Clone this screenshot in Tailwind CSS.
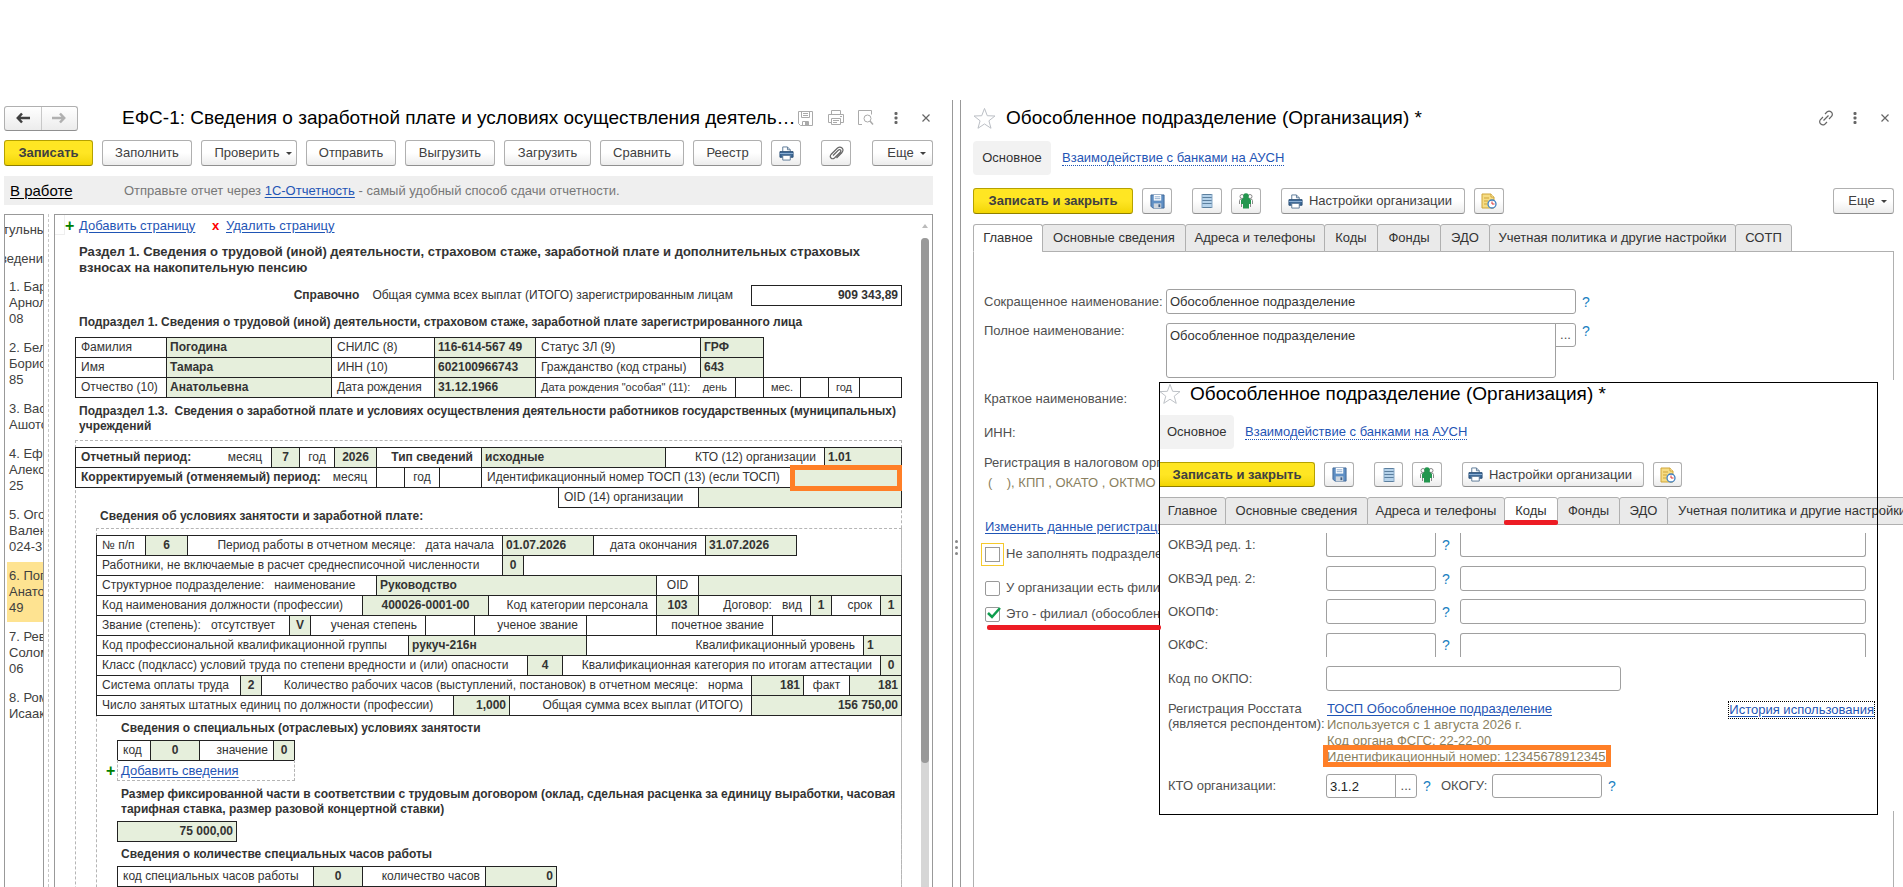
<!doctype html>
<html lang="ru">
  <head>
    <meta charset="UTF-8" />
    <meta name="viewport" content="width=device-width, initial-scale=1.0" />
    <title>ЕФС-1: Сведения о заработной плате</title>
    <script src="https://cdn.jsdelivr.net/npm/@tailwindcss/browser@4"></script>
  </head>
  <body
    class="h-screen overflow-hidden bg-white pt-[100px] font-['Liberation_Sans',Arial,sans-serif] text-[13px] leading-4 text-[#404040]"
  >
    <!-- shared icons -->
    <svg class="hidden">
      <symbol id="i-floppy" viewBox="0 0 16 16">
        <path d="M1 1h14v14H3l-2-2z" fill="#5f8fc4" stroke="#3f6896" />
        <path d="M4 1h8v6H4z" fill="#fff" />
        <path d="M5 3h6M5 5h6" stroke="#8aa9cc" />
        <path d="M4 10h8v5H4z" fill="#cfd6de" />
        <path d="M9 11h2v3H9z" fill="#3f5f86" />
      </symbol>
      <symbol id="i-printer" viewBox="0 0 16 16">
        <path d="M4 6V1h5l3 3v2" fill="#fff" stroke="#5b7896" />
        <path d="M9 1v3h3" fill="none" stroke="#5b7896" />
        <path d="M1 6h14v6H1z" fill="#3d6a99" stroke="#2c4f74" />
        <path d="M1 8h14" stroke="#8fb2d6" />
        <path d="M4 10h8v5H4z" fill="#fff" stroke="#5b7896" />
      </symbol>
      <symbol id="i-list" viewBox="0 0 12 16">
        <path d="M1 1h10v14H1z" fill="#b5d2ea" />
        <path
          d="M1 1.500h10M1 4.500h10M1 7.500h10M1 10.500h10M1 14.500h10"
          stroke="#5c7f9e"
        />
        <path d="M1 1v14M11 1v14" stroke="#8aabc8" />
      </symbol>
      <symbol id="i-people" viewBox="0 0 16 16">
        <g fill="#fff" stroke="#8a8a8a">
          <circle cx="4" cy="3.500" r="2" />
          <circle cx="12" cy="3.500" r="2" />
          <path d="M1.500 11V7.500q0-1.500 2-1.500h9q2 0 2 1.500V11M3.500 14v-5M12.500 14v-5" />
        </g>
        <circle cx="8" cy="3" r="2.800" fill="#23964e" />
        <path d="M5 5h6l2 2v4h-2v4.500H5V11H3V7z" fill="#23964e" />
      </symbol>
      <symbol id="i-report" viewBox="0 0 16 16">
        <path d="M1 1h9l3 3v11H1z" fill="#f6dc84" stroke="#cfa53a" />
        <path d="M10 1v3h3" fill="#fff3c4" stroke="#cfa53a" />
        <path d="M3 5h5M3 8h4M3 11h3" stroke="#cfa53a" />
        <circle cx="11" cy="11" r="4" fill="#fff" stroke="#3f7fbf" stroke-width="1.300" />
        <path d="M11 8.500V11h2.500" fill="none" stroke="#d33" />
      </symbol>
      <symbol id="i-star" viewBox="0 0 24 24">
        <path
          d="M12 1.500l2.900 7.600 8 .3-6.300 5 2.200 7.800L12 17.700l-6.800 4.500 2.200-7.800-6.300-5 8-.3z"
          fill="none"
          stroke="#b8bcc2"
        />
      </symbol>
      <symbol id="i-dots" viewBox="0 0 4 12">
        <g fill="#666">
          <rect x="0.500" y="0" width="3" height="3" rx="1" />
          <rect x="0.500" y="4.500" width="3" height="3" rx="1" />
          <rect x="0.500" y="9" width="3" height="3" rx="1" />
        </g>
      </symbol>
      <symbol id="i-close" viewBox="0 0 8 8">
        <path d="M.5.5l7 7m0-7l-7 7" stroke="#666" stroke-width="1.200" />
      </symbol>
    </svg>

    <div class="flex h-full">
      <!-- report window -->
      <section class="flex w-[953px] shrink-0 flex-col border-r border-[#999] pl-1">
        <header class="flex h-[36px] w-[929px] shrink-0 items-center">
          <div class="flex h-[25px] w-[74px] rounded-[3px] border border-[#b0b0b0] border-b-[#909090] bg-linear-to-b from-white to-[#ececec]">
            <button type="button" aria-label="Назад" class="flex flex-1 items-center justify-center border-r border-[#c8c8c8]">
              <svg class="h-[12px] w-[14px]" viewBox="0 0 14 12" fill="none" stroke="#404040" stroke-width="2.500"><path d="M14 6H2M6 1.500L1.800 6 6 10.500" /></svg>
            </button>
            <button type="button" aria-label="Вперед" class="flex flex-1 items-center justify-center">
              <svg class="h-[12px] w-[14px]" viewBox="0 0 14 12" fill="none" stroke="#b0b0b0" stroke-width="2.500"><path d="M0 6h12M8 1.500L12.200 6 8 10.500" /></svg>
            </button>
          </div>
          <h1 class="ml-[44px] w-[676px] text-[19px] leading-6 whitespace-nowrap text-black">ЕФС-1: Сведения о заработной плате и условиях осуществления деятель…</h1>
          <button type="button" aria-label="Сохранить">
            <svg class="size-[15px]" viewBox="0 0 15 15" fill="none" stroke="#aaa"><path d="M.5.5h14v14H2.500l-2-2zM3.500.5v6h8v-6M5 2.500h5M5 4.500h5M4.500 14.500v-4h6v4" /><path d="M7 11h3v3H7z" fill="#aaa" stroke="none" /></svg>
          </button>
          <button type="button" aria-label="Печать" class="ml-[15px]">
            <svg class="size-4" viewBox="0 0 16 16" fill="none" stroke="#aaa"><path d="M3.500 4.500v-4h9v4M3.500 12.500h-3v-8h15v8h-3M3.500 8.500h9v6h-9zM5 10.500h6M5 12.500h4M12 6.500h2" /></svg>
          </button>
          <button type="button" aria-label="Предварительный просмотр" class="ml-[14px]">
            <svg class="size-4" viewBox="0 0 16 16" fill="none" stroke="#aaa"><path d="M4 14.500H.5V.5h13v4" /><circle cx="9.500" cy="8.500" r="3.500" /><path d="M12 11l3 3.500" stroke-width="1.500" /></svg>
          </button>
          <button type="button" aria-label="Меню" class="ml-[20px]"><svg class="h-3 w-1"><use href="#i-dots" /></svg></button>
          <button type="button" aria-label="Закрыть" class="ml-[24px]"><svg class="size-2"><use href="#i-close" /></svg></button>
        </header>

        <div class="mt-[4px] flex w-[929px] shrink-0 gap-[9px] [&_button]:flex [&_button]:h-[26px] [&_button]:items-center [&_button]:justify-center [&_button]:rounded-[3px] [&_button]:border [&_button]:border-[#b0b0b0] [&_button]:border-b-[#909090] [&_button]:bg-linear-to-b [&_button]:from-white [&_button]:from-50% [&_button]:to-[#ececec]">
          <button type="button" class="w-[89px] border-[#b5a100]! border-b-[#8f7f00]! from-[#ffe623]! to-[#f2d500]! font-bold">Записать</button>
          <button type="button" class="w-[90px]">Заполнить</button>
          <button type="button" class="w-[96px] gap-[6px] pl-2">Проверить<span class="border-x-[3px] border-t-[3px] border-x-transparent border-t-[#404040]"></span></button>
          <button type="button" class="w-[90px]">Отправить</button>
          <button type="button" class="w-[90px]">Выгрузить</button>
          <button type="button" class="w-[87px]">Загрузить</button>
          <button type="button" class="w-[84px]">Сравнить</button>
          <button type="button" class="w-[69px]">Реестр</button>
          <button type="button" aria-label="Печать" class="w-[30px]"><svg class="size-[15px]"><use href="#i-printer" /></svg></button>
          <button type="button" aria-label="Присоединенные файлы" class="ml-[11px] w-[30px]">
            <svg class="size-[15px]" viewBox="0 0 15 15" fill="none" stroke="#666" stroke-width="1.200"><path d="M4 9.500l5.500-5.500q1.200-.8 2 0t0 2L5.500 12q-2 1.500-3.500 0t0-3.500L8.500 2q2.500-1.800 4.500 0t0 4.500L7.500 12" /></svg>
          </button>
          <button type="button" class="ml-auto w-[61px] gap-[6px] pl-2">Еще<span class="border-x-[3px] border-t-[3px] border-x-transparent border-t-[#404040]"></span></button>
        </div>

        <div class="mt-[10px] flex h-[29px] w-[929px] shrink-0 items-center bg-[#efefef]">
          <a href="#" class="ml-[6px] w-[114px] text-[15px] text-black underline underline-offset-2">В работе</a>
          <p class="text-[#777]">Отправьте отчет через <a href="#" class="text-[#1f55b5] underline underline-offset-2">1С-Отчетность</a> - самый удобный способ сдачи отчетности.</p>
        </div>

        <div class="mt-[9px] flex min-h-0 w-[929px] flex-1">
          <!-- section list -->
          <ul class="w-[40px] shrink-0 overflow-hidden border-x border-t border-[#999] pt-[7px] whitespace-nowrap">
            <li class="-ml-[2px]">тульный</li>
            <li class="mt-[13px] -ml-[5px]">ведения</li>
            <li class="mt-[12px] ml-1">1. Бар<br />Арнол<br />08</li>
            <li class="mt-[13px] ml-1">2. Бел<br />Борис<br />85</li>
            <li class="mt-[13px] ml-1">3. Вас<br />Ашото</li>
            <li class="mt-[13px] ml-1">4. Ефр<br />Алекс<br />25</li>
            <li class="mt-[13px] ml-1">5. Ого<br />Вален<br />024-37</li>
            <li class="mt-[7px] ml-[2px] bg-[#fee391] py-[6px] pl-[2px]">6. Пог<br />Анато<br />49</li>
            <li class="mt-[7px] ml-1">7. Рев<br />Солом<br />06</li>
            <li class="mt-[13px] ml-1">8. Ром<br />Исаак</li>
          </ul>
          <div class="ml-[4px] border-l border-dashed border-[#c8c8c8]"></div>

          <!-- form sheet -->
          <div class="ml-[5px] flex min-w-0 flex-1 overflow-hidden border-x border-t border-[#999] text-[12px] leading-[15px] text-[#333]">
            <div class="w-[866px] shrink-0">
              <div class="flex h-[20px] items-center text-[13px]">
                <span class="h-full w-[10px] border-r border-b border-[#eee]"></span>
                <span class="w-[14px] text-[16px] font-bold text-[#008000]">+</span>
                <a href="#" class="w-[133px] whitespace-nowrap text-[#1f55b5] underline underline-offset-2">Добавить страницу</a>
                <span class="w-[14px] font-bold text-[#f00]">x</span>
                <a href="#" class="whitespace-nowrap text-[#1f55b5] underline underline-offset-2">Удалить страницу</a>
              </div>

              <h2 class="mt-[9px] ml-6 text-[13px] leading-4 font-bold">Раздел 1. Сведения о трудовой (иной) деятельности, страховом стаже, заработной плате и дополнительных страховых<br />взносах на накопительную пенсию</h2>

              <div class="mt-[9px] flex h-[21px] w-[847px] items-center justify-end">
                <b>Справочно</b>
                <span class="mr-[18px] ml-[13px]">Общая сумма всех выплат (ИТОГО) зарегистрированным лицам</span>
                <span class="flex h-full w-[151px] items-center justify-end border border-[#222] pr-[3px] font-bold">909 343,89</span>
              </div>

              <h3 class="mt-[9px] ml-6 font-bold whitespace-nowrap">Подраздел 1. Сведения о трудовой (иной) деятельности, страховом стаже, заработной плате зарегистрированного лица</h3>

              <table class="mt-[7px] ml-5 block [&_td]:-mr-px [&_td]:-mb-px [&_td]:flex [&_td]:h-[21px] [&_td]:shrink-0 [&_td]:items-center [&_td]:border [&_td]:border-[#222] [&_td]:px-[5px] [&_td]:whitespace-pre [&_tr]:flex">
                <tbody class="block">
                  <tr>
                    <td class="w-[92px]">Фамилия</td>
                    <td class="w-[166px] bg-[#e6efdc] pl-[3px]! font-bold">Погодина</td>
                    <td class="w-[104px]">СНИЛС (8)</td>
                    <td class="w-[102px] bg-[#e6efdc] pl-[3px]! font-bold">116-614-567 49</td>
                    <td class="w-[166px]">Статус ЗЛ (9)</td>
                    <td class="w-[64px] bg-[#e6efdc] pl-[3px]! font-bold">ГРФ</td>
                  </tr>
                  <tr>
                    <td class="w-[92px]">Имя</td>
                    <td class="w-[166px] bg-[#e6efdc] pl-[3px]! font-bold">Тамара</td>
                    <td class="w-[104px]">ИНН (10)</td>
                    <td class="w-[102px] bg-[#e6efdc] pl-[3px]! font-bold">602100966743</td>
                    <td class="w-[166px]">Гражданство (код страны)</td>
                    <td class="w-[64px] bg-[#e6efdc] pl-[3px]! font-bold">643</td>
                  </tr>
                  <tr>
                    <td class="w-[92px]">Отчество (10)</td>
                    <td class="w-[166px] bg-[#e6efdc] pl-[3px]! font-bold">Анатольевна</td>
                    <td class="w-[104px]">Дата рождения</td>
                    <td class="w-[102px] bg-[#e6efdc] pl-[3px]! font-bold">31.12.1966</td>
                    <td class="w-[201px] justify-between pr-[8px]! text-[11px]">Дата рождения "особая" (11):<span>день</span></td>
                    <td class="w-[29px]"></td>
                    <td class="w-[38px] justify-center text-[11px]">мес.</td>
                    <td class="w-[29px]"></td>
                    <td class="w-[32px] justify-center text-[11px]">год</td>
                    <td class="w-[43px]"></td>
                  </tr>
                </tbody>
              </table>

              <h3 class="mt-[7px] ml-6 font-bold whitespace-pre">Подраздел 1.3.  Сведения о заработной плате и условиях осуществления деятельности работников государственных (муниципальных)<br />учреждений</h3>

              <div class="mt-[6px] ml-5 h-[600px] w-[827px] border-x border-t border-dashed border-[#b5b5b5] pt-[6px]">
                <table class="-ml-px block [&_td]:-mr-px [&_td]:-mb-px [&_td]:flex [&_td]:h-[21px] [&_td]:shrink-0 [&_td]:items-center [&_td]:border [&_td]:border-[#222] [&_td]:px-[5px] [&_td]:whitespace-pre [&_tr]:flex">
                  <tbody class="block">
                    <tr>
                      <td class="w-[197px] justify-between pr-[9px]!"><b>Отчетный период:</b><span>месяц</span></td>
                      <td class="w-[29px] justify-center bg-[#e6efdc] font-bold">7</td>
                      <td class="w-[36px] justify-center">год</td>
                      <td class="w-[43px] justify-center bg-[#e6efdc] font-bold">2026</td>
                      <td class="w-[106px] justify-end pr-[8px]! font-bold">Тип сведений</td>
                      <td class="w-[185px] bg-[#e6efdc] pl-[3px]! font-bold">исходные</td>
                      <td class="w-[160px] justify-end pr-[8px]!">КТО (12) организации</td>
                      <td class="w-[78px] bg-[#e6efdc] pl-[3px]! font-bold">1.01</td>
                    </tr>
                    <tr>
                      <td class="w-[302px] justify-between pr-[9px]!"><b>Корректируемый (отменяемый) период:</b><span>месяц</span></td>
                      <td class="w-[29px]"></td>
                      <td class="w-[36px] justify-center">год</td>
                      <td class="w-[43px]"></td>
                      <td class="w-[310px]">Идентификационный номер ТОСП (13) (если ТОСП)</td>
                      <td class="relative w-[112px] bg-[#e6efdc]"><span class="absolute -inset-x-px -top-[3px] -bottom-[4px] z-10 border-[5px] border-[#ff7f27]"></span></td>
                    </tr>
                    <tr class="pl-[483px]">
                      <td class="w-[141px]">OID (14) организации</td>
                      <td class="w-[204px] bg-[#e6efdc]"></td>
                    </tr>
                  </tbody>
                </table>

                <h4 class="mt-[2px] ml-6 font-bold">Сведения об условиях занятости и заработной плате:</h4>

                <div class="mt-[4px] -mr-px ml-5 h-[500px] border-x border-t border-dashed border-[#b5b5b5] pt-[6px]">
                  <table class="-ml-px block [&_td]:-mr-px [&_td]:-mb-px [&_td]:flex [&_td]:h-[21px] [&_td]:shrink-0 [&_td]:items-center [&_td]:border [&_td]:border-[#222] [&_td]:px-[5px] [&_td]:whitespace-pre [&_tr]:flex">
                    <tbody class="block">
                      <tr>
                        <td class="w-[50px]">№ п/п</td>
                        <td class="w-[43px] justify-center bg-[#e6efdc] font-bold">6</td>
                        <td class="w-[316px] justify-end pr-[8px]!">Период работы в отчетном месяце:   дата начала</td>
                        <td class="w-[92px] bg-[#e6efdc] pl-[3px]! font-bold">01.07.2026</td>
                        <td class="w-[113px] justify-end pr-[8px]!">дата окончания</td>
                        <td class="w-[92px] bg-[#e6efdc] pl-[3px]! font-bold">31.07.2026</td>
                      </tr>
                      <tr>
                        <td class="w-[407px]">Работники, не включаемые в расчет среднесписочной численности</td>
                        <td class="w-[22px] justify-center bg-[#e6efdc] font-bold">0</td>
                      </tr>
                      <tr>
                        <td class="w-[281px]">Структурное подразделение:   наименование</td>
                        <td class="w-[281px] bg-[#e6efdc] pl-[3px]! font-bold">Руководство</td>
                        <td class="w-[43px] justify-center">OID</td>
                        <td class="w-[204px] bg-[#e6efdc]"></td>
                      </tr>
                      <tr>
                        <td class="w-[267px]">Код наименования должности (профессии)</td>
                        <td class="w-[127px] justify-center bg-[#e6efdc] font-bold">400026-0001-00</td>
                        <td class="w-[169px] justify-end pr-[8px]!">Код категории персонала</td>
                        <td class="w-[43px] justify-center bg-[#e6efdc] font-bold">103</td>
                        <td class="w-[113px] justify-end pr-[8px]!">Договор:   вид</td>
                        <td class="w-[22px] justify-center bg-[#e6efdc] font-bold">1</td>
                        <td class="w-[50px] justify-end pr-[8px]!">срок</td>
                        <td class="w-[22px] justify-center bg-[#e6efdc] font-bold">1</td>
                      </tr>
                      <tr>
                        <td class="w-[194px]">Звание (степень):   отсутствует</td>
                        <td class="w-[22px] justify-center bg-[#e6efdc] font-bold">V</td>
                        <td class="w-[116px] justify-end pr-[8px]!">ученая степень</td>
                        <td class="w-[50px]"></td>
                        <td class="w-[113px] justify-end pr-[8px]!">ученое звание</td>
                        <td class="w-[71px]"></td>
                        <td class="w-[117px] justify-end pr-[8px]!">почетное звание</td>
                        <td class="w-[130px]"></td>
                      </tr>
                      <tr>
                        <td class="w-[313px]">Код профессиональной квалификационной группы</td>
                        <td class="w-[179px] bg-[#e6efdc] pl-[3px]! font-bold">рукуч-216н</td>
                        <td class="w-[278px] justify-end pr-[8px]!">Квалификационный уровень</td>
                        <td class="w-[39px] bg-[#e6efdc] pl-[3px]! font-bold">1</td>
                      </tr>
                      <tr>
                        <td class="w-[432px]">Класс (подкласс) условий труда по степени вредности и (или) опасности</td>
                        <td class="w-[36px] justify-center bg-[#e6efdc] font-bold">4</td>
                        <td class="w-[319px] justify-end pr-[8px]!">Квалификационная категория по итогам аттестации</td>
                        <td class="w-[22px] justify-center bg-[#e6efdc] font-bold">0</td>
                      </tr>
                      <tr>
                        <td class="w-[145px]">Система оплаты труда</td>
                        <td class="w-[22px] justify-center bg-[#e6efdc] font-bold">2</td>
                        <td class="w-[491px] justify-end pr-[8px]!">Количество рабочих часов (выступлений, постановок) в отчетном месяце:   норма</td>
                        <td class="w-[53px] justify-end bg-[#e6efdc] pr-[3px]! font-bold">181</td>
                        <td class="w-[47px] justify-center">факт</td>
                        <td class="w-[53px] justify-end bg-[#e6efdc] pr-[3px]! font-bold">181</td>
                      </tr>
                      <tr>
                        <td class="w-[358px]">Число занятых штатных единиц по должности (профессии)</td>
                        <td class="w-[57px] justify-end bg-[#e6efdc] pr-[3px]! font-bold">1,000</td>
                        <td class="w-[243px] justify-end pr-[8px]!">Общая сумма всех выплат (ИТОГО)</td>
                        <td class="w-[151px] justify-end bg-[#e6efdc] pr-[3px]! font-bold">156 750,00</td>
                      </tr>
                    </tbody>
                  </table>

                  <h4 class="mt-[6px] ml-6 font-bold">Сведения о специальных (отраслевых) условиях занятости</h4>
                  <table class="mt-[4px] ml-5 block [&_td]:-mr-px [&_td]:-mb-px [&_td]:flex [&_td]:h-[21px] [&_td]:shrink-0 [&_td]:items-center [&_td]:border [&_td]:border-[#222] [&_td]:px-[5px] [&_td]:whitespace-pre [&_tr]:flex">
                    <tbody class="block">
                      <tr>
                        <td class="w-[34px]">код</td>
                        <td class="w-[50px] justify-center bg-[#e6efdc] font-bold">0</td>
                        <td class="w-[75px] justify-end">значение</td>
                        <td class="w-[22px] justify-center bg-[#e6efdc] font-bold">0</td>
                      </tr>
                    </tbody>
                  </table>
                  <div class="flex h-[21px] items-center text-[13px]">
                    <span class="w-5 pl-[9px] text-[16px] font-bold text-[#008000]">+</span>
                    <span class="flex h-full w-[178px] items-center border-x border-b border-dashed border-[#b5b5b5] pl-[3px]">
                      <a href="#" class="text-[#1f55b5] underline underline-offset-2">Добавить сведения</a>
                    </span>
                  </div>

                  <h4 class="mt-[6px] ml-6 font-bold whitespace-nowrap">Размер фиксированной части в соответствии с трудовым договором (оклад, сдельная расценка за единицу выработки, часовая<br />тарифная ставка, размер разовой концертной ставки)</h4>
                  <div class="mt-[4px] -mb-px ml-5 flex h-[21px] w-[120px] items-center justify-end border border-[#222] bg-[#e6efdc] pr-[3px] font-bold">75 000,00</div>

                  <h4 class="mt-[6px] ml-6 font-bold">Сведения о количестве специальных часов работы</h4>
                  <table class="mt-[4px] ml-5 block [&_td]:-mr-px [&_td]:-mb-px [&_td]:flex [&_td]:h-[21px] [&_td]:shrink-0 [&_td]:items-center [&_td]:border [&_td]:border-[#222] [&_td]:px-[5px] [&_td]:whitespace-pre [&_tr]:flex">
                    <tbody class="block">
                      <tr>
                        <td class="w-[197px]">код специальных часов работы</td>
                        <td class="w-[50px] justify-center bg-[#e6efdc] font-bold">0</td>
                        <td class="w-[124px] justify-end">количество часов</td>
                        <td class="w-[72px] justify-end bg-[#e6efdc] pr-[3px]! font-bold">0</td>
                      </tr>
                    </tbody>
                  </table>
                </div>
              </div>
            </div>
            <div class="flex w-2 shrink-0 flex-col items-center">
              <span class="mt-[9px] mb-[10px] border-x-[3px] border-b-4 border-x-transparent border-b-[#bbb]"></span>
              <div class="w-full flex-1 rounded-t-full bg-[#d6d6d6]"><div class="h-[525px] w-full rounded-full bg-[#999]"></div></div>
            </div>
          </div>
        </div>
      </section>

      <!-- splitter -->
      <div class="flex w-2 shrink-0 flex-col items-center gap-[3px] border-r border-[#999] pt-[440px]">
        <span class="size-[3px] rounded-full bg-[#888]"></span>
        <span class="size-[3px] rounded-full bg-[#888]"></span>
        <span class="size-[3px] rounded-full bg-[#888]"></span>
      </div>

      <!-- organization card -->
      <section class="relative flex min-w-0 flex-1 flex-col overflow-hidden pr-[9px] pl-3">
        <header class="flex h-[36px] shrink-0 items-center">
          <svg class="size-[23px]"><use href="#i-star" /></svg>
          <h1 class="ml-[10px] text-[19px] leading-6 whitespace-nowrap text-black">Обособленное подразделение (Организация) *</h1>
          <button type="button" aria-label="Ссылка" class="ml-auto">
            <svg class="size-4" viewBox="0 0 16 16" fill="none" stroke="#666" stroke-width="1.200"><path d="M7 4l2.200-2.200q2-1.500 4 .2t.5 4.200L11 9M9 12l-2.200 2.200q-2 1.500-4-.2t-.5-4.200L5 7M5.500 10.500l5-5" /></svg>
          </button>
          <button type="button" aria-label="Меню" class="ml-[19px]"><svg class="h-3 w-1"><use href="#i-dots" /></svg></button>
          <button type="button" aria-label="Закрыть" class="mr-[5px] ml-[24px]"><svg class="size-2"><use href="#i-close" /></svg></button>
        </header>

        <nav class="mt-[5px] flex h-[34px] shrink-0 items-center gap-[11px]">
          <a href="#" class="flex h-full w-[78px] items-center justify-center rounded-[4px] bg-[#f2f2f2] text-[#333]">Основное</a>
          <a href="#" class="border-b border-dotted border-[#1f55b5] leading-[14px] text-[#1f55b5]">Взаимодействие с банками на АУСН</a>
        </nav>

        <div class="mt-[13px] flex shrink-0 gap-[9px] [&_button]:flex [&_button]:h-[26px] [&_button]:items-center [&_button]:justify-center [&_button]:rounded-[3px] [&_button]:border [&_button]:border-[#b0b0b0] [&_button]:border-b-[#909090] [&_button]:bg-linear-to-b [&_button]:from-white [&_button]:from-50% [&_button]:to-[#ececec]">
          <button type="button" class="w-[160px] border-[#b5a100]! border-b-[#8f7f00]! from-[#ffe623]! to-[#f2d500]! font-bold">Записать и закрыть</button>
          <button type="button" aria-label="Записать" class="w-[30px]"><svg class="size-[15px]"><use href="#i-floppy" /></svg></button>
          <button type="button" aria-label="Список" class="ml-[11px] w-[30px]"><svg class="h-4 w-3"><use href="#i-list" /></svg></button>
          <button type="button" aria-label="Сотрудники" class="w-[30px]"><svg class="size-4"><use href="#i-people" /></svg></button>
          <button type="button" class="ml-[11px] w-[184px] gap-[6px] pr-[6px]"><svg class="size-[15px]"><use href="#i-printer" /></svg>Настройки организации</button>
          <button type="button" aria-label="История" class="w-[30px]"><svg class="size-4"><use href="#i-report" /></svg></button>
          <button type="button" class="ml-auto w-[61px] gap-[6px] pl-2">Еще<span class="border-x-[3px] border-t-[3px] border-x-transparent border-t-[#404040]"></span></button>
        </div>

        <div role="tablist" class="relative z-1 mt-[10px] -mb-px flex h-[28px] shrink-0 text-[#333] [&_button]:-mr-px [&_button]:rounded-t-[3px] [&_button]:border [&_button]:border-[#b0b0b0] [&_button]:bg-[#eaeaea] [&_button]:whitespace-nowrap">
          <button type="button" role="tab" class="w-[70px] border-b-white! bg-white!">Главное</button>
          <button type="button" role="tab" class="w-[144px]">Основные сведения</button>
          <button type="button" role="tab" class="w-[140px]">Адреса и телефоны</button>
          <button type="button" role="tab" class="w-[54px]">Коды</button>
          <button type="button" role="tab" class="w-[64px]">Фонды</button>
          <button type="button" role="tab" class="w-[50px]">ЭДО</button>
          <button type="button" role="tab" class="w-[247px]">Учетная политика и другие настройки</button>
          <button type="button" role="tab" class="w-[57px]">СОТП</button>
        </div>

        <form class="flex-1 border-x border-t border-[#b0b0b0] pt-[37px] pl-[10px] whitespace-nowrap text-[#505050]">
          <div class="flex items-center">
            <label for="short-name" class="w-[182px]">Сокращенное наименование:</label>
            <input id="short-name" type="text" value="Обособленное подразделение" class="h-[25px] w-[410px] rounded-[3px] border border-[#a0a0a0] px-[3px] text-[#333]" />
            <button type="button" class="ml-[6px] text-[14px] text-[#1a7fc1]">?</button>
          </div>
          <div class="mt-[9px] flex items-start">
            <label for="full-name" class="w-[182px]">Полное наименование:</label>
            <textarea id="full-name" class="h-[55px] w-[390px] resize-none rounded-l-[3px] rounded-br-[3px] border border-[#a0a0a0] px-[3px] py-[4px] text-[#333]">Обособленное подразделение</textarea>
            <button type="button" aria-label="Открыть" class="-ml-px h-[24px] w-[21px] rounded-r-[3px] border border-[#a0a0a0]">...</button>
            <button type="button" class="ml-[6px] text-[14px] text-[#1a7fc1]">?</button>
          </div>
          <p class="mt-[13px]">Краткое наименование:</p>
          <p class="mt-[18px]">ИНН:</p>
          <p class="mt-[14px]">Регистрация в налоговом органе:</p>
          <p class="mt-[4px] ml-1 whitespace-pre text-[#8a7f60]">(    ), КПП , ОКАТО , ОКТМО</p>
          <a href="#" class="mt-[28px] ml-px block w-fit text-[#1f55b5] underline underline-offset-2">Изменить данные регистрации</a>
          <label class="mt-[11px] flex items-center gap-[6px]"><input type="checkbox" class="ml-px size-[15px] appearance-none border border-[#999] outline outline-offset-[3px] outline-[#f5c92c]" />Не заполнять подразделения</label>
          <label class="mt-[18px] flex items-center gap-[6px]"><input type="checkbox" class="ml-px size-[15px] appearance-none rounded-[2px] border border-[#999]" />У организации есть филиалы</label>
          <label class="relative mt-[10px] flex items-center gap-[6px]">
            <input type="checkbox" checked class="ml-px size-[15px] appearance-none rounded-[2px] border border-[#999]" />
            <svg class="absolute bottom-[3px] left-[3px] h-3 w-[14px]" viewBox="0 0 14 12" fill="none" stroke="#0f9d4e" stroke-width="2.500"><path d="M1 6l4 4 8-9" /></svg>
            Это - филиал (обособленное подразделение)
          </label>
          <div class="relative z-30 mt-[3px] ml-[3px] h-[5px] w-[174px] rounded-[2px] bg-[#ed1c24]"></div>
        </form>

        <!-- second card laid over the first one -->
        <div class="absolute top-[280px] right-0 left-[198px] z-10 h-[431px] overflow-hidden bg-white whitespace-nowrap text-[#505050]">
          <header class="flex h-[28px] items-center">
            <svg class="size-[22px]"><use href="#i-star" /></svg>
            <h2 class="ml-[9px] text-[19px] leading-6 text-black">Обособленное подразделение (Организация) *</h2>
          </header>
          <nav class="mt-[7px] flex h-[34px] items-center gap-[11px]">
            <a href="#" class="flex h-full w-[75px] items-center rounded-r-[4px] bg-[#f2f2f2] pl-2 text-[#333]">Основное</a>
            <a href="#" class="border-b border-dotted border-[#1f55b5] leading-[14px] text-[#1f55b5]">Взаимодействие с банками на АУСН</a>
          </nav>
          <div class="mt-[13px] flex gap-[9px] text-[#404040] [&_button]:flex [&_button]:h-[25px] [&_button]:items-center [&_button]:justify-center [&_button]:rounded-[3px] [&_button]:border [&_button]:border-[#b0b0b0] [&_button]:border-b-[#909090] [&_button]:bg-linear-to-b [&_button]:from-white [&_button]:from-50% [&_button]:to-[#ececec]">
            <button type="button" class="w-[156px] rounded-l-none! border-[#b5a100]! border-b-[#8f7f00]! from-[#ffe623]! to-[#f2d500]! font-bold">Записать и закрыть</button>
            <button type="button" aria-label="Записать" class="w-[30px]"><svg class="size-[15px]"><use href="#i-floppy" /></svg></button>
            <button type="button" aria-label="Список" class="ml-[11px] w-[29px]"><svg class="h-4 w-3"><use href="#i-list" /></svg></button>
            <button type="button" aria-label="Сотрудники" class="w-[30px]"><svg class="size-4"><use href="#i-people" /></svg></button>
            <button type="button" class="ml-[11px] w-[182px] gap-[6px] pr-[6px]"><svg class="size-[15px]"><use href="#i-printer" /></svg>Настройки организации</button>
            <button type="button" aria-label="История" class="w-[29px]"><svg class="size-4"><use href="#i-report" /></svg></button>
          </div>
          <div role="tablist" class="mt-[10px] flex h-[28px] text-[#333] [&_button]:-mr-px [&_button]:shrink-0 [&_button]:rounded-t-[3px] [&_button]:border [&_button]:border-[#b0b0b0] [&_button]:bg-[#eaeaea]">
            <button type="button" role="tab" class="w-[67px] rounded-tl-none!">Главное</button>
            <button type="button" role="tab" class="w-[143px]">Основные сведения</button>
            <button type="button" role="tab" class="w-[138px]">Адреса и телефоны</button>
            <button type="button" role="tab" class="relative w-[54px] bg-white!">Коды<span class="absolute -inset-x-px -bottom-px h-[5px] rounded-[2px] bg-[#ed1c24]"></span></button>
            <button type="button" role="tab" class="w-[63px]">Фонды</button>
            <button type="button" role="tab" class="w-[49px]">ЭДО</button>
            <button type="button" role="tab" class="w-[260px] pl-[10px] text-left">Учетная политика и другие настройки</button>
          </div>

          <form class="mt-[8px] pl-[9px] [&_input]:rounded-[3px] [&_input]:border [&_input]:border-[#a0a0a0] [&_input]:px-[3px]">
            <div class="flex h-[24px] items-center">
              <label for="okved1" class="w-[158px]">ОКВЭД ред. 1:</label>
              <input id="okved1" type="text" class="h-[24px] w-[110px] rounded-t-none! border-t-0!" />
              <button type="button" class="w-[24px] pr-1 text-[14px] text-[#1a7fc1]">?</button>
              <input type="text" aria-label="ОКВЭД ред. 1, наименование" class="h-[24px] w-[406px] rounded-t-none! border-t-0!" />
            </div>
            <div class="mt-[9px] flex h-[25px] items-center">
              <label for="okved2" class="w-[158px]">ОКВЭД ред. 2:</label>
              <input id="okved2" type="text" class="h-[25px] w-[110px]" />
              <button type="button" class="w-[24px] pr-1 text-[14px] text-[#1a7fc1]">?</button>
              <input type="text" aria-label="ОКВЭД ред. 2, наименование" class="h-[25px] w-[406px]" />
            </div>
            <div class="mt-[8px] flex h-[25px] items-center">
              <label for="okopf" class="w-[158px]">ОКОПФ:</label>
              <input id="okopf" type="text" class="h-[25px] w-[110px]" />
              <button type="button" class="w-[24px] pr-1 text-[14px] text-[#1a7fc1]">?</button>
              <input type="text" aria-label="ОКОПФ, наименование" class="h-[25px] w-[406px]" />
            </div>
            <div class="mt-[9px] flex h-[24px] items-center">
              <label for="okfs" class="w-[158px]">ОКФС:</label>
              <input id="okfs" type="text" class="h-[24px] w-[110px] rounded-b-none! border-b-0!" />
              <button type="button" class="w-[24px] pr-1 text-[14px] text-[#1a7fc1]">?</button>
              <input type="text" aria-label="ОКФС, наименование" class="h-[24px] w-[406px] rounded-b-none! border-b-0!" />
            </div>
            <div class="mt-[9px] flex h-[25px] items-center">
              <label for="okpo" class="w-[158px]">Код по ОКПО:</label>
              <input id="okpo" type="text" class="h-[25px] w-[295px]" />
            </div>
            <div class="mt-[10px] flex items-start">
              <p class="w-[159px] leading-[15px]">Регистрация Росстата<br />(является респондентом):</p>
              <div class="text-[#8a7f60]">
                <a href="#" class="text-[#1f55b5] underline underline-offset-2">ТОСП Обособленное подразделение</a>
                <p>Используется с 1 августа 2026 г.</p>
                <p>Код органа ФСГС: 22-22-00</p>
                <p class="relative">Идентификационный номер: 12345678912345<span class="absolute -top-[4px] -left-[4px] h-[22px] w-[288px] border-[5px] border-[#ff7f27]"></span></p>
              </div>
              <a href="#" class="mr-[28px] ml-auto border border-dotted border-black text-[#1f55b5] underline underline-offset-2">История использования</a>
            </div>
            <div class="mt-[9px] flex h-[24px] items-center">
              <label for="kto" class="w-[158px]">КТО организации:</label>
              <input id="kto" type="text" value="3.1.2" class="h-[24px] w-[70px] rounded-r-none! text-[#222]" />
              <button type="button" aria-label="Выбрать" class="-ml-px h-[24px] w-[22px] rounded-r-[3px] border border-[#a0a0a0]">...</button>
              <button type="button" class="w-[20px] text-[14px] text-[#1a7fc1]">?</button>
              <label for="okogu" class="ml-[4px] w-[51px]">ОКОГУ:</label>
              <input id="okogu" type="text" class="h-[24px] w-[110px]" />
              <button type="button" class="w-[20px] text-[14px] text-[#1a7fc1]">?</button>
            </div>
          </form>
        </div>
        <div class="pointer-events-none absolute top-[282px] left-[198px] z-20 h-[433px] w-[719px] border border-black"></div>
      </section>
    </div>
  </body>
</html>
